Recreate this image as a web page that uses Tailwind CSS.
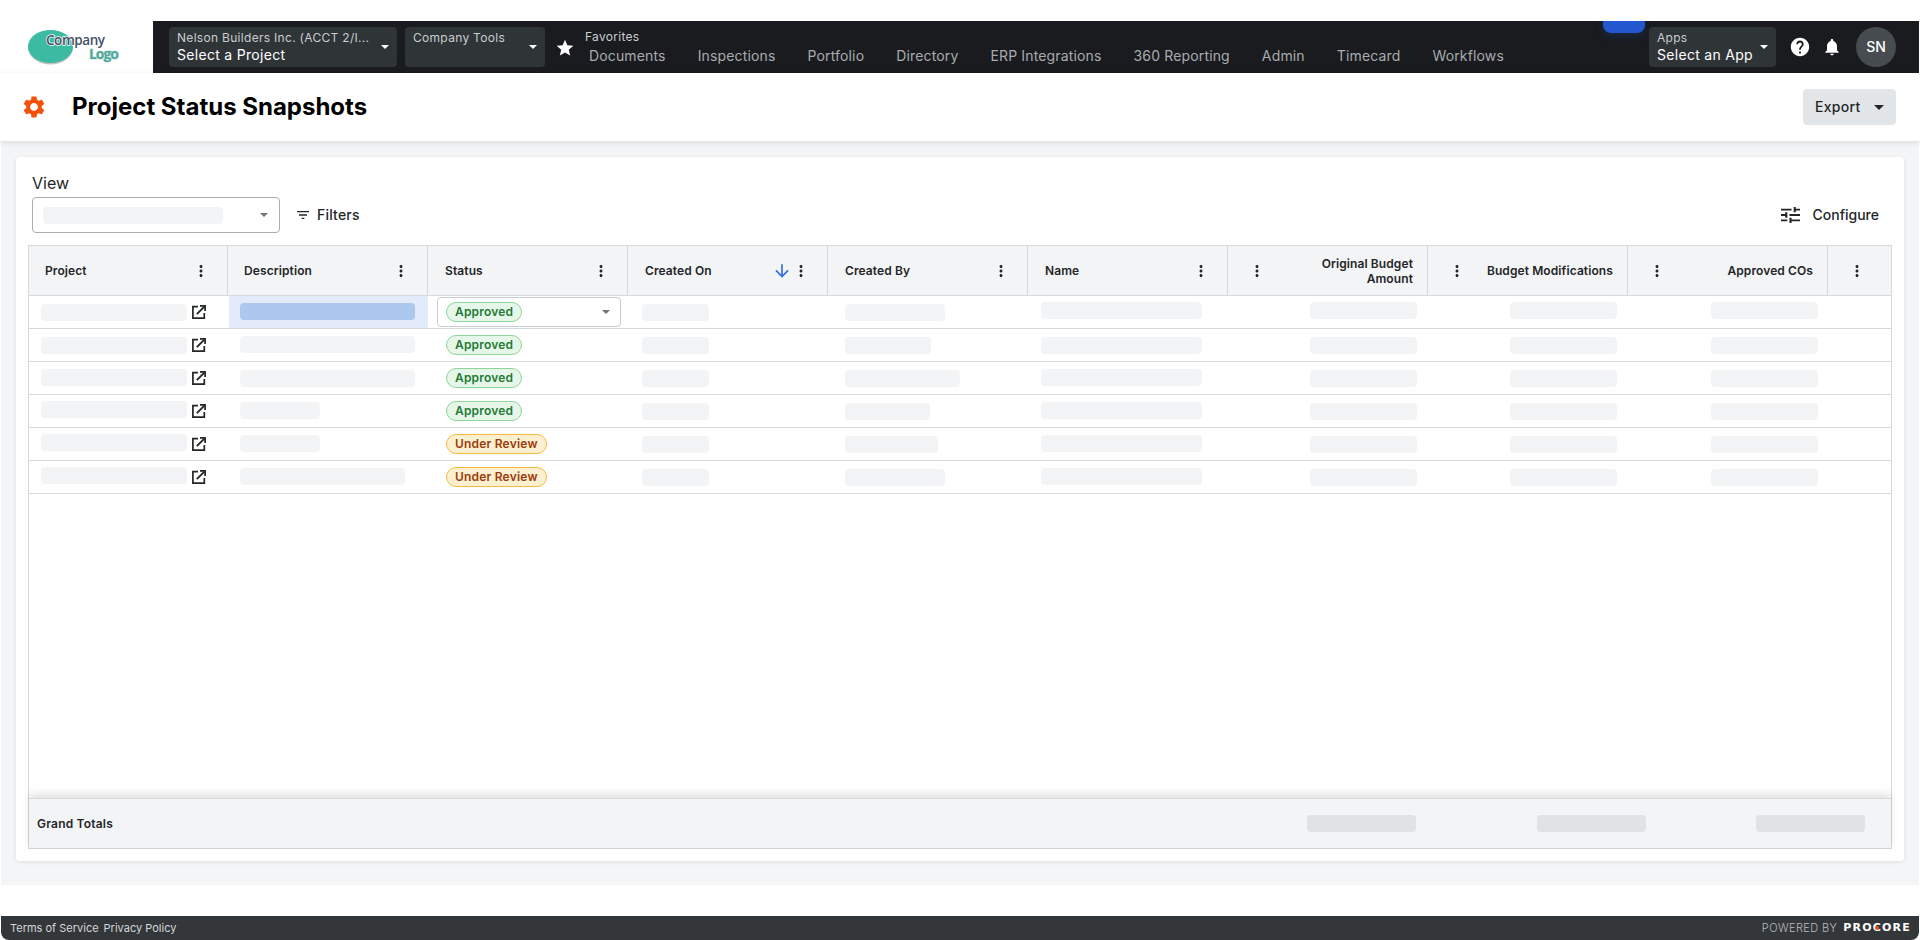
<!DOCTYPE html>
<html lang="en">
<head>
  <meta charset="UTF-8" />
  <title>Project Status Snapshots</title>
  <script src="https://cdn.jsdelivr.net/npm/@tailwindcss/browser@4"></script>
</head>
<body class="bg-white text-[#232628] font-['Inter',sans-serif] overflow-hidden">
<div class="h-[940px] flex flex-col">

  <!-- top bar -->
  <div class="pt-[21px] flex shrink-0">
    <div class="w-[153px] h-[52px] shrink-0">
      <svg width="153" height="52" viewBox="0 0 153 52">
        <ellipse cx="50.5" cy="26.5" rx="22.5" ry="17" fill="#9a9a9a" opacity=".6"/>
        <ellipse cx="50.5" cy="25.5" rx="22.5" ry="16.5" fill="#3bbba2"/>
        <text x="46" y="24" font-family="Open Sans" font-size="13.5" font-weight="600" fill="#454e66" stroke="#fff" stroke-width="1.5" paint-order="stroke" textLength="59">Company</text>
        <text x="89" y="38" font-family="Open Sans" font-size="14" font-weight="700" fill="#4da99b" stroke="#d5e4e1" stroke-width="1.2" paint-order="stroke" textLength="30">Logo</text>
      </svg>
    </div>
    <nav class="relative flex-1 h-[52px] bg-[#191b1f] flex items-center pl-4 pr-[23px] mr-px">
      <div class="absolute left-[1450px] top-0 w-[42px] h-3 rounded-b-lg bg-[#2257cf] shadow-[0_4px_8px_rgba(34,87,207,.2)]"></div>

      <div class="w-[228px] h-10 rounded bg-[#2f3437] flex items-center pl-2 pr-2 justify-between">
        <div class="min-w-0">
          <div class="text-xs leading-[15px] tracking-[.3px] text-[#c9cdcf] whitespace-nowrap">Nelson Builders Inc. (ACCT 2/I...</div>
          <div class="text-sm leading-5 tracking-[.3px] text-white">Select a Project</div>
        </div>
        <svg width="8" height="4" viewBox="0 0 8 4" class="shrink-0"><path d="M0 0h8L4 4z" fill="#fff"/></svg>
      </div>
      <div class="w-[140px] h-10 ml-2 rounded bg-[#2f3437] flex items-center pl-2 pr-2 justify-between">
        <div class="text-xs leading-[15px] tracking-[.3px] text-[#c9cdcf] mb-[19px]">Company Tools</div>
        <svg width="8" height="4" viewBox="0 0 8 4"><path d="M0 0h8L4 4z" fill="#fff"/></svg>
      </div>

      <svg width="20" height="20" viewBox="0 0 24 24" fill="#fff" class="ml-[10px] mt-[2px] shrink-0"><path d="M12 17.27L18.18 21l-1.64-7.03L22 9.24l-7.19-.61L12 2 9.19 8.63 2 9.24l5.46 4.73L5.82 21z"/></svg>

      <div class="ml-[10px] h-[52px] pt-2">
        <div class="text-xs leading-[15px] tracking-[.3px] text-[#c9cdcf]">Favorites</div>
        <div class="flex gap-8 pl-1 mt-[2px] text-sm leading-[20px] tracking-[.15px] text-[#a8abae] whitespace-nowrap">
          <span>Documents</span>
          <span>Inspections</span>
          <span>Portfolio</span>
          <span>Directory</span>
          <span>ERP Integrations</span>
          <span>360 Reporting</span>
          <span>Admin</span>
          <span>Timecard</span>
          <span>Workflows</span>
        </div>
      </div>

      <div class="ml-auto flex items-center">
        <div class="w-[127px] h-10 rounded bg-[#2f3437] flex items-center pl-2 pr-2 justify-between">
          <div>
            <div class="text-xs leading-[15px] tracking-[.3px] text-[#c9cdcf]">Apps</div>
            <div class="text-sm leading-5 tracking-[.3px] text-white whitespace-nowrap">Select an App</div>
          </div>
          <svg width="8" height="4" viewBox="0 0 8 4" class="shrink-0"><path d="M0 0h8L4 4z" fill="#fff"/></svg>
        </div>
        <svg width="22" height="22" viewBox="0 0 24 24" fill="#fff" class="ml-[13px]"><path d="M12 2C6.48 2 2 6.48 2 12s4.48 10 10 10 10-4.48 10-10S17.52 2 12 2zm1 17h-2v-2h2v2zm2.07-7.75l-.9.92C13.45 12.9 13 13.5 13 15h-2v-.5c0-1.1.45-2.1 1.17-2.83l1.24-1.26c.37-.36.59-.86.59-1.41 0-1.1-.9-2-2-2s-2 .9-2 2H8c0-2.21 1.79-4 4-4s4 1.79 4 4c0 .88-.36 1.68-.93 2.25z"/></svg>
        <svg width="20" height="20" viewBox="0 0 24 24" fill="#fff" class="ml-[11px]"><path d="M12 22c1.1 0 2-.9 2-2h-4c0 1.1.89 2 2 2zm6-6v-5c0-3.07-1.64-5.64-4.5-6.32V4c0-.83-.67-1.5-1.5-1.5s-1.5.67-1.5 1.5v.68C7.63 5.36 6 7.92 6 11v5l-2 2v1h16v-1l-2-2z"/></svg>
        <div class="ml-[14px] w-10 h-10 rounded-full bg-[#464c4f] flex items-center justify-center text-sm font-medium text-white">SN</div>
      </div>
    </nav>
  </div>

  <!-- title row -->
  <header class="relative z-10 h-[68px] shrink-0 flex items-center pl-[21px] pr-6 bg-white shadow-[0_2px_6px_rgba(0,0,0,.1)]">
    <svg width="26" height="26" viewBox="0 0 24 24" fill="#f4520a" class="shrink-0"><path d="M19.14 12.94c.04-.3.06-.61.06-.94 0-.32-.02-.64-.07-.94l2.03-1.58c.18-.14.23-.41.12-.61l-1.92-3.32c-.12-.22-.37-.29-.59-.22l-2.39.96c-.5-.38-1.03-.7-1.62-.94l-.36-2.54c-.04-.24-.24-.41-.48-.41h-3.84c-.24 0-.43.17-.47.41l-.36 2.54c-.59.24-1.13.57-1.62.94l-2.39-.96c-.22-.08-.47 0-.59.22L2.74 8.87c-.12.21-.08.47.12.61l2.03 1.58c-.05.3-.09.63-.09.94s.02.64.07.94l-2.03 1.58c-.18.14-.23.41-.12.61l1.92 3.32c.12.22.37.29.59.22l2.39-.96c.5.38 1.03.7 1.62.94l.36 2.54c.05.24.24.41.48.41h3.84c.24 0 .44-.17.47-.41l.36-2.54c.59-.24 1.13-.56 1.62-.94l2.39.96c.22.08.47 0 .59-.22l1.92-3.32c.12-.22.07-.47-.12-.61l-2.01-1.58zM12 15.6c-1.98 0-3.6-1.62-3.6-3.6s1.62-3.6 3.6-3.6 3.6 1.62 3.6 3.6-1.62 3.6-3.6 3.6z"/></svg>
    <h1 class="ml-[25px] text-2xl font-bold text-black">Project Status Snapshots</h1>
    <button class="ml-auto w-[93px] h-9 rounded bg-[#e3e6e8] flex items-center pl-3 pr-3 justify-between text-sm font-medium tracking-[.3px]">
      Export
      <svg width="10" height="5" viewBox="0 0 10 5"><path d="M0 0h10L5 5z" fill="#232628"/></svg>
    </button>
  </header>

  <!-- page body -->
  <main class="h-[744px] shrink-0 mx-px bg-[#f4f5f6] pt-4 px-[15px] pb-6">
    <section class="h-full rounded bg-white shadow-[0_1px_4px_rgba(0,0,0,.1)] px-3 pb-3 flex flex-col">
      <div class="px-1 pt-[17px] h-[88px] shrink-0">
        <div class="text-base leading-[18px]">View</div>
        <div class="mt-[5px] flex items-center">
          <div class="w-[248px] h-9 rounded border border-[#a9adb1] flex items-center pl-[10px] pr-[11px] justify-between">
            <div class="w-[180px] h-[17px] rounded bg-[#f3f4f6]"></div>
            <svg width="8" height="4" viewBox="0 0 8 4"><path d="M0 0h8L4 4z" fill="#6f7579"/></svg>
          </div>
          <svg width="16" height="16" viewBox="0 0 24 24" fill="#232628" class="ml-[15px]"><path d="M10 18h4v-2h-4v2zM3 6v2h18V6H3zm3 7h12v-2H6v2z"/></svg>
          <span class="ml-[6px] text-sm font-medium tracking-[.2px]">Filters</span>
          <svg width="19" height="16" viewBox="3 3 18 18" preserveAspectRatio="none" fill="#232628" class="ml-auto"><path d="M3 17v2h6v-2H3zM3 5v2h10V5H3zm10 16v-2h8v-2h-8v-2h-2v6h2zM7 9v2H3v2h4v2h2V9H7zm14 4v-2H11v2h10zm-6-4h2V7h4V5h-4V3h-2v6z"/></svg>
          <span class="ml-[13px] mr-[9px] text-sm font-medium">Configure</span>
        </div>
      </div>

      <!-- table -->
      <div class="flex-1 min-h-0 flex flex-col border border-[#d6d9dc] text-xs">
        <div class="h-[50px] shrink-0 grid grid-cols-[199px_200px_200px_200px_200px_200px_200px_200px_200px_63px] bg-[#f3f4f6] border-b border-[#d6d9dc] font-semibold tracking-[.1px]">
          <div class="flex items-center justify-between pl-4 pr-[17px] border-r border-[#d6d9dc]">Project
            <svg width="18" height="18" viewBox="0 0 24 24" fill="#232628"><path d="M12 8c1.1 0 2-.9 2-2s-.9-2-2-2-2 .9-2 2 .9 2 2 2zm0 2c-1.1 0-2 .9-2 2s.9 2 2 2 2-.9 2-2-.9-2-2-2zm0 6c-1.1 0-2 .9-2 2s.9 2 2 2 2-.9 2-2-.9-2-2-2z"/></svg></div>
          <div class="flex items-center justify-between pl-[16px] pr-[17px] border-r border-[#d6d9dc]">Description
            <svg width="18" height="18" viewBox="0 0 24 24" fill="#232628"><path d="M12 8c1.1 0 2-.9 2-2s-.9-2-2-2-2 .9-2 2 .9 2 2 2zm0 2c-1.1 0-2 .9-2 2s.9 2 2 2 2-.9 2-2-.9-2-2-2zm0 6c-1.1 0-2 .9-2 2s.9 2 2 2 2-.9 2-2-.9-2-2-2z"/></svg></div>
          <div class="flex items-center justify-between pl-[17px] pr-[17px] border-r border-[#d6d9dc]">Status
            <svg width="18" height="18" viewBox="0 0 24 24" fill="#232628"><path d="M12 8c1.1 0 2-.9 2-2s-.9-2-2-2-2 .9-2 2 .9 2 2 2zm0 2c-1.1 0-2 .9-2 2s.9 2 2 2 2-.9 2-2-.9-2-2-2zm0 6c-1.1 0-2 .9-2 2s.9 2 2 2 2-.9 2-2-.9-2-2-2z"/></svg></div>
          <div class="flex items-center pl-[17px] pr-[17px] border-r border-[#d6d9dc]">Created On
            <svg width="20" height="20" viewBox="0 0 24 24" fill="#2f6fe0" class="ml-auto"><path d="M20 12l-1.41-1.41L13 16.17V4h-2v12.17l-5.58-5.59L4 12l8 8 8-8z"/></svg>
            <svg width="18" height="18" viewBox="0 0 24 24" fill="#232628"><path d="M12 8c1.1 0 2-.9 2-2s-.9-2-2-2-2 .9-2 2 .9 2 2 2zm0 2c-1.1 0-2 .9-2 2s.9 2 2 2 2-.9 2-2-.9-2-2-2zm0 6c-1.1 0-2 .9-2 2s.9 2 2 2 2-.9 2-2-.9-2-2-2z"/></svg></div>
          <div class="flex items-center justify-between pl-[17px] pr-[17px] border-r border-[#d6d9dc]">Created By
            <svg width="18" height="18" viewBox="0 0 24 24" fill="#232628"><path d="M12 8c1.1 0 2-.9 2-2s-.9-2-2-2-2 .9-2 2 .9 2 2 2zm0 2c-1.1 0-2 .9-2 2s.9 2 2 2 2-.9 2-2-.9-2-2-2zm0 6c-1.1 0-2 .9-2 2s.9 2 2 2 2-.9 2-2-.9-2-2-2z"/></svg></div>
          <div class="flex items-center justify-between pl-[17px] pr-[17px] border-r border-[#d6d9dc]">Name
            <svg width="18" height="18" viewBox="0 0 24 24" fill="#232628"><path d="M12 8c1.1 0 2-.9 2-2s-.9-2-2-2-2 .9-2 2 .9 2 2 2zm0 2c-1.1 0-2 .9-2 2s.9 2 2 2 2-.9 2-2-.9-2-2-2zm0 6c-1.1 0-2 .9-2 2s.9 2 2 2 2-.9 2-2-.9-2-2-2z"/></svg></div>
          <div class="flex items-center justify-between pl-5 pr-[14px] border-r border-[#d6d9dc]">
            <svg width="18" height="18" viewBox="0 0 24 24" fill="#232628" class="shrink-0"><path d="M12 8c1.1 0 2-.9 2-2s-.9-2-2-2-2 .9-2 2 .9 2 2 2zm0 2c-1.1 0-2 .9-2 2s.9 2 2 2 2-.9 2-2-.9-2-2-2zm0 6c-1.1 0-2 .9-2 2s.9 2 2 2 2-.9 2-2-.9-2-2-2z"/></svg>
            <span class="w-[110px] text-right leading-[15px]">Original Budget Amount</span></div>
          <div class="flex items-center justify-between pl-5 pr-[14px] border-r border-[#d6d9dc]">
            <svg width="18" height="18" viewBox="0 0 24 24" fill="#232628" class="shrink-0"><path d="M12 8c1.1 0 2-.9 2-2s-.9-2-2-2-2 .9-2 2 .9 2 2 2zm0 2c-1.1 0-2 .9-2 2s.9 2 2 2 2-.9 2-2-.9-2-2-2zm0 6c-1.1 0-2 .9-2 2s.9 2 2 2 2-.9 2-2-.9-2-2-2z"/></svg>
            <span class="whitespace-nowrap">Budget Modifications</span></div>
          <div class="flex items-center justify-between pl-5 pr-[14px] border-r border-[#d6d9dc]">
            <svg width="18" height="18" viewBox="0 0 24 24" fill="#232628" class="shrink-0"><path d="M12 8c1.1 0 2-.9 2-2s-.9-2-2-2-2 .9-2 2 .9 2 2 2zm0 2c-1.1 0-2 .9-2 2s.9 2 2 2 2-.9 2-2-.9-2-2-2zm0 6c-1.1 0-2 .9-2 2s.9 2 2 2 2-.9 2-2-.9-2-2-2z"/></svg>
            <span>Approved COs</span></div>
          <div class="flex items-center pl-5">
            <svg width="18" height="18" viewBox="0 0 24 24" fill="#232628"><path d="M12 8c1.1 0 2-.9 2-2s-.9-2-2-2-2 .9-2 2 .9 2 2 2zm0 2c-1.1 0-2 .9-2 2s.9 2 2 2 2-.9 2-2-.9-2-2-2zm0 6c-1.1 0-2 .9-2 2s.9 2 2 2 2-.9 2-2-.9-2-2-2z"/></svg></div>
        </div>

        <div class="flex-1 min-h-0 overflow-hidden">
          <!-- row 1 -->
          <div class="h-[33px] grid grid-cols-[200px_199px_200px_200px_200px_200px_200px_200px_200px_63px] border-b border-[#d6d9dc]">
            <div class="flex items-start pl-3"><div class="mt-2 w-[146px] h-[17px] rounded bg-[#f3f4f6]"></div><svg width="14" height="14" viewBox="0 0 14 14" fill="none" stroke="#232628" class="ml-[5px] mt-[9px]"><path d="M6 1.7H.9v11.4h11.4V8" stroke-width="1.7"/><path d="M4.8 9.2 12.4 1.6" stroke-width="1.9"/><path d="M8 .9h5.1V6" stroke-width="1.7"/></svg></div>
            <div class="pl-[11px] pt-[7px] bg-[#e3eafa]"><div class="w-[175px] h-[17px] rounded bg-[#adc8ef]"></div></div>
            <div class="pl-[9px] pt-px"><div class="w-[184px] h-[30px] rounded border border-[#c9ccd0] pl-2 pr-[10px] flex items-center justify-between">
              <span class="h-5 px-2 rounded-full border border-[#8cd699] bg-[#e6f7e9] text-[#1f7a35] font-semibold text-xs leading-[18px] tracking-[.2px]">Approved</span>
              <svg width="8" height="4" viewBox="0 0 8 4"><path d="M0 0h8L4 4z" fill="#6f7579"/></svg></div></div>
            <div class="pl-[14px] pt-2"><div class="w-[67px] h-[17px] rounded bg-[#f3f4f6]"></div></div>
            <div class="pl-[17px] pt-2"><div class="w-[100px] h-[17px] rounded bg-[#f3f4f6]"></div></div>
            <div class="pl-[13px] pt-[6px]"><div class="w-[161px] h-[17px] rounded bg-[#f3f4f6]"></div></div>
            <div class="flex justify-end pr-[11px] pt-[6px]"><div class="w-[107px] h-[17px] rounded bg-[#f3f4f6]"></div></div>
            <div class="flex justify-end pr-[11px] pt-[6px]"><div class="w-[107px] h-[17px] rounded bg-[#f3f4f6]"></div></div>
            <div class="flex justify-end pr-[10px] pt-[6px]"><div class="w-[107px] h-[17px] rounded bg-[#f3f4f6]"></div></div>
          </div>
          <!-- row 2 -->
          <div class="h-[33px] grid grid-cols-[200px_199px_200px_200px_200px_200px_200px_200px_200px_63px] border-b border-[#d6d9dc]">
            <div class="flex items-start pl-3"><div class="mt-2 w-[146px] h-[17px] rounded bg-[#f3f4f6]"></div><svg width="14" height="14" viewBox="0 0 14 14" fill="none" stroke="#232628" class="ml-[5px] mt-[9px]"><path d="M6 1.7H.9v11.4h11.4V8" stroke-width="1.7"/><path d="M4.8 9.2 12.4 1.6" stroke-width="1.9"/><path d="M8 .9h5.1V6" stroke-width="1.7"/></svg></div>
            <div class="pl-[11px] pt-[7px]"><div class="w-[175px] h-[17px] rounded bg-[#f3f4f6]"></div></div>
            <div class="pl-[18px] flex items-center"><span class="h-5 px-2 rounded-full border border-[#8cd699] bg-[#e6f7e9] text-[#1f7a35] font-semibold text-xs leading-[18px] tracking-[.2px]">Approved</span></div>
            <div class="pl-[14px] pt-2"><div class="w-[67px] h-[17px] rounded bg-[#f3f4f6]"></div></div>
            <div class="pl-[17px] pt-2"><div class="w-[86px] h-[17px] rounded bg-[#f3f4f6]"></div></div>
            <div class="pl-[13px] pt-2"><div class="w-[161px] h-[17px] rounded bg-[#f3f4f6]"></div></div>
            <div class="flex justify-end pr-[11px] pt-2"><div class="w-[107px] h-[17px] rounded bg-[#f3f4f6]"></div></div>
            <div class="flex justify-end pr-[11px] pt-2"><div class="w-[107px] h-[17px] rounded bg-[#f3f4f6]"></div></div>
            <div class="flex justify-end pr-[10px] pt-2"><div class="w-[107px] h-[17px] rounded bg-[#f3f4f6]"></div></div>
          </div>
          <!-- row 3 -->
          <div class="h-[33px] grid grid-cols-[200px_199px_200px_200px_200px_200px_200px_200px_200px_63px] border-b border-[#d6d9dc]">
            <div class="flex items-start pl-3"><div class="mt-[7px] w-[146px] h-[17px] rounded bg-[#f3f4f6]"></div><svg width="14" height="14" viewBox="0 0 14 14" fill="none" stroke="#232628" class="ml-[5px] mt-[9px]"><path d="M6 1.7H.9v11.4h11.4V8" stroke-width="1.7"/><path d="M4.8 9.2 12.4 1.6" stroke-width="1.9"/><path d="M8 .9h5.1V6" stroke-width="1.7"/></svg></div>
            <div class="pl-[11px] pt-2"><div class="w-[175px] h-[17px] rounded bg-[#f3f4f6]"></div></div>
            <div class="pl-[18px] flex items-center"><span class="h-5 px-2 rounded-full border border-[#8cd699] bg-[#e6f7e9] text-[#1f7a35] font-semibold text-xs leading-[18px] tracking-[.2px]">Approved</span></div>
            <div class="pl-[14px] pt-2"><div class="w-[67px] h-[17px] rounded bg-[#f3f4f6]"></div></div>
            <div class="pl-[17px] pt-2"><div class="w-[115px] h-[17px] rounded bg-[#f3f4f6]"></div></div>
            <div class="pl-[13px] pt-[7px]"><div class="w-[161px] h-[17px] rounded bg-[#f3f4f6]"></div></div>
            <div class="flex justify-end pr-[11px] pt-2"><div class="w-[107px] h-[17px] rounded bg-[#f3f4f6]"></div></div>
            <div class="flex justify-end pr-[11px] pt-2"><div class="w-[107px] h-[17px] rounded bg-[#f3f4f6]"></div></div>
            <div class="flex justify-end pr-[10px] pt-2"><div class="w-[107px] h-[17px] rounded bg-[#f3f4f6]"></div></div>
          </div>
          <!-- row 4 -->
          <div class="h-[33px] grid grid-cols-[200px_199px_200px_200px_200px_200px_200px_200px_200px_63px] border-b border-[#d6d9dc]">
            <div class="flex items-start pl-3"><div class="mt-[6px] w-[146px] h-[17px] rounded bg-[#f3f4f6]"></div><svg width="14" height="14" viewBox="0 0 14 14" fill="none" stroke="#232628" class="ml-[5px] mt-[9px]"><path d="M6 1.7H.9v11.4h11.4V8" stroke-width="1.7"/><path d="M4.8 9.2 12.4 1.6" stroke-width="1.9"/><path d="M8 .9h5.1V6" stroke-width="1.7"/></svg></div>
            <div class="pl-[11px] pt-[7px]"><div class="w-20 h-[17px] rounded bg-[#f3f4f6]"></div></div>
            <div class="pl-[18px] flex items-center"><span class="h-5 px-2 rounded-full border border-[#8cd699] bg-[#e6f7e9] text-[#1f7a35] font-semibold text-xs leading-[18px] tracking-[.2px]">Approved</span></div>
            <div class="pl-[14px] pt-2"><div class="w-[67px] h-[17px] rounded bg-[#f3f4f6]"></div></div>
            <div class="pl-[17px] pt-2"><div class="w-[85px] h-[17px] rounded bg-[#f3f4f6]"></div></div>
            <div class="pl-[13px] pt-[7px]"><div class="w-[161px] h-[17px] rounded bg-[#f3f4f6]"></div></div>
            <div class="flex justify-end pr-[11px] pt-2"><div class="w-[107px] h-[17px] rounded bg-[#f3f4f6]"></div></div>
            <div class="flex justify-end pr-[11px] pt-2"><div class="w-[107px] h-[17px] rounded bg-[#f3f4f6]"></div></div>
            <div class="flex justify-end pr-[10px] pt-2"><div class="w-[107px] h-[17px] rounded bg-[#f3f4f6]"></div></div>
          </div>
          <!-- row 5 -->
          <div class="h-[33px] grid grid-cols-[200px_199px_200px_200px_200px_200px_200px_200px_200px_63px] border-b border-[#d6d9dc]">
            <div class="flex items-start pl-3"><div class="mt-[6px] w-[146px] h-[17px] rounded bg-[#f3f4f6]"></div><svg width="14" height="14" viewBox="0 0 14 14" fill="none" stroke="#232628" class="ml-[5px] mt-[9px]"><path d="M6 1.7H.9v11.4h11.4V8" stroke-width="1.7"/><path d="M4.8 9.2 12.4 1.6" stroke-width="1.9"/><path d="M8 .9h5.1V6" stroke-width="1.7"/></svg></div>
            <div class="pl-[11px] pt-[7px]"><div class="w-20 h-[17px] rounded bg-[#f3f4f6]"></div></div>
            <div class="pl-[18px] flex items-center"><span class="h-5 px-2 rounded-full border border-[#f2bb3d] bg-[#fdf0d0] text-[#9c3a0b] font-semibold text-xs leading-[18px] tracking-[.2px]">Under Review</span></div>
            <div class="pl-[14px] pt-2"><div class="w-[67px] h-[17px] rounded bg-[#f3f4f6]"></div></div>
            <div class="pl-[17px] pt-2"><div class="w-[93px] h-[17px] rounded bg-[#f3f4f6]"></div></div>
            <div class="pl-[13px] pt-[7px]"><div class="w-[161px] h-[17px] rounded bg-[#f3f4f6]"></div></div>
            <div class="flex justify-end pr-[11px] pt-2"><div class="w-[107px] h-[17px] rounded bg-[#f3f4f6]"></div></div>
            <div class="flex justify-end pr-[11px] pt-2"><div class="w-[107px] h-[17px] rounded bg-[#f3f4f6]"></div></div>
            <div class="flex justify-end pr-[10px] pt-2"><div class="w-[107px] h-[17px] rounded bg-[#f3f4f6]"></div></div>
          </div>
          <!-- row 6 -->
          <div class="h-[33px] grid grid-cols-[200px_199px_200px_200px_200px_200px_200px_200px_200px_63px] border-b border-[#d6d9dc]">
            <div class="flex items-start pl-3"><div class="mt-[6px] w-[146px] h-[17px] rounded bg-[#f3f4f6]"></div><svg width="14" height="14" viewBox="0 0 14 14" fill="none" stroke="#232628" class="ml-[5px] mt-[9px]"><path d="M6 1.7H.9v11.4h11.4V8" stroke-width="1.7"/><path d="M4.8 9.2 12.4 1.6" stroke-width="1.9"/><path d="M8 .9h5.1V6" stroke-width="1.7"/></svg></div>
            <div class="pl-[11px] pt-[7px]"><div class="w-[165px] h-[17px] rounded bg-[#f3f4f6]"></div></div>
            <div class="pl-[18px] flex items-center"><span class="h-5 px-2 rounded-full border border-[#f2bb3d] bg-[#fdf0d0] text-[#9c3a0b] font-semibold text-xs leading-[18px] tracking-[.2px]">Under Review</span></div>
            <div class="pl-[14px] pt-2"><div class="w-[67px] h-[17px] rounded bg-[#f3f4f6]"></div></div>
            <div class="pl-[17px] pt-2"><div class="w-[100px] h-[17px] rounded bg-[#f3f4f6]"></div></div>
            <div class="pl-[13px] pt-[7px]"><div class="w-[161px] h-[17px] rounded bg-[#f3f4f6]"></div></div>
            <div class="flex justify-end pr-[11px] pt-2"><div class="w-[107px] h-[17px] rounded bg-[#f3f4f6]"></div></div>
            <div class="flex justify-end pr-[11px] pt-2"><div class="w-[107px] h-[17px] rounded bg-[#f3f4f6]"></div></div>
            <div class="flex justify-end pr-[10px] pt-2"><div class="w-[107px] h-[17px] rounded bg-[#f3f4f6]"></div></div>
          </div>
        </div>

        <div class="h-[50px] shrink-0 flex items-center bg-[#f3f4f6] border-t border-[#d6d9dc] shadow-[0_-4px_8px_rgba(0,0,0,.12)] pl-2 pr-[26px]">
          <span class="font-semibold tracking-[.2px]">Grand Totals</span>
          <div class="ml-auto w-[109px] h-[17px] rounded bg-[#e1e2e4]"></div>
          <div class="ml-[121px] w-[109px] h-[17px] rounded bg-[#e1e2e4]"></div>
          <div class="ml-[110px] w-[109px] h-[17px] rounded bg-[#e1e2e4]"></div>
        </div>
      </div>
    </section>
  </main>

  <div class="flex-1"></div>

  <footer class="h-6 shrink-0 mx-px rounded-b-lg bg-[#33373a] flex items-center pl-[9px] pr-2 text-[11px] text-[#d4d6d8]">
    <span>Terms of Service</span>
    <span class="ml-[5px]">Privacy Policy</span>
    <span class="ml-auto font-light tracking-[.4px] text-[#b8bbbd]">POWERED BY</span>
    <span class="relative ml-[6px] text-[11px] font-black tracking-[1.2px] text-white [font-family:'DejaVu_Sans']">PROCORE<span class="absolute left-[32px] top-[6px] w-1 h-1 rounded-full bg-[#f4520a]"></span></span>
  </footer>
</div>
</body>
</html>
